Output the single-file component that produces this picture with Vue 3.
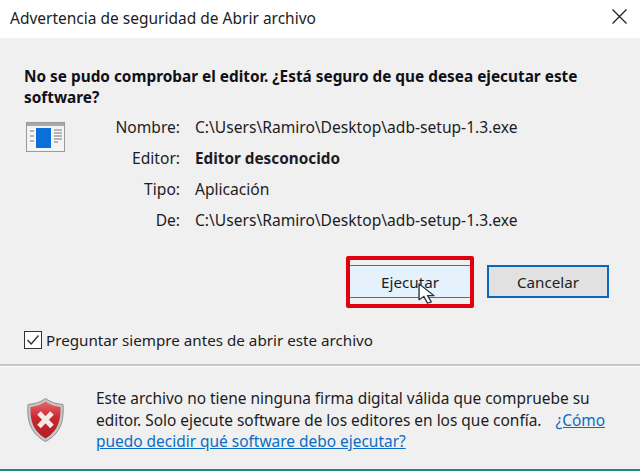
<template>
  <div class="dialog">
    <header class="titlebar">
      <span class="title">Advertencia de seguridad de Abrir archivo</span>
      <svg class="close" width="15" height="15" viewBox="0 0 15 15">
        <path d="M0.5 0.5L14.5 14.5M14.5 0.5L0.5 14.5" stroke="#222" stroke-width="1.3" fill="none" />
      </svg>
    </header>

    <main class="main">
      <h1 class="heading">No se pudo comprobar el editor. ¿Está seguro de que desea ejecutar este software?</h1>

      <div class="info">
        <svg class="file-icon" width="40" height="31" viewBox="0 0 40 31">
          <rect x="0.5" y="0.5" width="38" height="29" fill="#f4f4f4" stroke="#9a9a9a" />
          <rect x="1" y="1" width="37" height="3" fill="#a9a9a9" />
          <rect x="10" y="6" width="15" height="20" fill="#0a6fd6" />
          <path d="M4 9h4M4 14h4M4 19h4M28 8h8M28 11h8M28 14h8M28 17h8M28 20h4" stroke="#a0a0a0" stroke-width="1.4" />
        </svg>
        <dl class="fields">
          <template v-for="row in fields" :key="row.label">
            <dt>{{ row.label }}</dt>
            <dd :class="{ strong: row.strong }">{{ row.value }}</dd>
          </template>
        </dl>
      </div>

      <div class="actions">
        <button class="btn run">
          Ejecutar
          <span class="highlight"></span>
          <svg class="cursor" width="17" height="21" viewBox="0 0 16 25" preserveAspectRatio="none">
            <path d="M1 1V20L5.5 16L9 24L12.5 22.5L9 15H15Z" fill="#fff" stroke="#2a3040" stroke-width="1.3" stroke-linejoin="round" />
          </svg>
        </button>
        <button class="btn cancel">Cancelar</button>
      </div>

      <label class="ask">
        <span class="box">
          <svg width="14" height="12" viewBox="0 0 14 12">
            <path d="M1.5 6L5.2 10L12.5 1.5" stroke="#333" stroke-width="1.4" fill="none" />
          </svg>
        </span>
        Preguntar siempre antes de abrir este archivo
      </label>
    </main>

    <footer class="warning">
      <svg class="shield" width="37" height="44" viewBox="0 0 37 44">
        <defs>
          <linearGradient id="shieldFill" x1="0" y1="0" x2="0" y2="1">
            <stop offset="0" stop-color="#e4686c" />
            <stop offset="0.45" stop-color="#c9262d" />
            <stop offset="1" stop-color="#b01f25" />
          </linearGradient>
        </defs>
        <path d="M18.5 0.5C14 4 8 6 1 6.5C0 20 2 35 18.5 43.5C35 35 37 20 36 6.5C29 6 23 4 18.5 0.5Z" fill="#c6c6c6" stroke="#8f8f8f" />
        <path d="M18.5 3.5C14.5 6.5 9 8.5 3.5 9C3 21 5.5 33 18.5 40.5C31.5 33 34 21 33.5 9C28 8.5 22.5 6.5 18.5 3.5Z" fill="url(#shieldFill)" />
        <path d="M12 15L25 28.5M25 15L12 28.5" stroke="#f5e9e9" stroke-width="5" fill="none" />
      </svg>
      <div class="warning-text">
        <div>Este archivo no tiene ninguna firma digital válida que compruebe su</div>
        <div class="line">
          <span>editor. Solo ejecute software de los editores en los que confía.</span>
          <a class="link">¿Cómo</a>
        </div>
        <div><a class="link">puedo decidir qué software debo ejecutar?</a></div>
      </div>
    </footer>
  </div>
</template>

<script setup>
const path = 'C:\\Users\\Ramiro\\Desktop\\adb-setup-1.3.exe'

const fields = [
  { label: 'Nombre:', value: path },
  { label: 'Editor:', value: 'Editor desconocido', strong: true },
  { label: 'Tipo:', value: 'Aplicación' },
  { label: 'De:', value: path },
]
</script>

<style>
html,
body {
  margin: 0;
  background: #f0f0f0;
}
</style>

<style scoped>
.dialog {
  width: 640px;
  height: 471px;
  box-sizing: border-box;
  display: flex;
  flex-direction: column;
  overflow: hidden;
  background: #f0f0f0;
  border-bottom: 2px solid #178a8c;
  font-family: "Noto Sans", "Open Sans", sans-serif;
  font-size: 15.6px;
  color: #1c1c24;
}

.titlebar {
  height: 38px;
  flex: none;
  display: flex;
  align-items: center;
  justify-content: space-between;
  padding: 0 13px 2px 10px;
  box-sizing: border-box;
  background: #fff;
}

.title {
  font-size: 15.5px;
}

.close {
  margin-bottom: 3px;
}

.main {
  height: 328px;
  flex: none;
  box-sizing: border-box;
  padding: 28px 24px 0;
  border-bottom: 2px solid #c4c4c4;
  box-shadow: 0 1px 0 #fff;
}

.heading {
  margin: 0;
  width: 560px;
  font-size: 15.36px;
  line-height: 21px;
  font-weight: 700;
  color: #101018;
}

.info {
  display: flex;
  margin-top: 3px;
}

.file-icon {
  flex: none;
  margin: 11px 0 0 2px;
}

.fields {
  margin: 0 0 0 24px;
  display: grid;
  grid-template-columns: 90px auto;
  column-gap: 15px;
  grid-auto-rows: 31px;
  align-items: center;
}

.fields dt {
  text-align: right;
}

.fields dd {
  margin: 0;
}

.fields dd.strong {
  font-weight: 700;
  font-size: 15.3px;
}

.actions {
  display: flex;
  justify-content: flex-end;
  gap: 16px;
  margin: 30px 7px 0 0;
}

.btn {
  position: relative;
  height: 33px;
  box-sizing: border-box;
  padding: 0;
  font: inherit;
  font-size: 15.2px;
  color: inherit;
  border-radius: 0;
}

.run {
  width: 122px;
  background: #e5f1fb;
  border: 1px solid #2a7ca8;
}

.cancel {
  width: 122px;
  background: #e1e1e1;
  border: 2px solid #0a68bf;
}

.highlight {
  position: absolute;
  left: -4px;
  right: -4px;
  top: -10px;
  bottom: -11px;
  border: 4px solid #e00010;
  border-radius: 2px;
}

.cursor {
  position: absolute;
  left: 68px;
  top: 17px;
}

.ask {
  display: flex;
  align-items: center;
  gap: 4px;
  margin-top: 32px;
  font-size: 15.2px;
}

.box {
  width: 18px;
  height: 18px;
  box-sizing: border-box;
  display: flex;
  align-items: center;
  justify-content: center;
  background: #fff;
  border: 1px solid #333;
}

.warning {
  flex: 1;
  display: flex;
  padding: 22px 20px 0 27px;
  gap: 32px;
  font-size: 15.44px;
}

.shield {
  flex: none;
  margin-top: 10px;
}

.warning-text {
  width: 512px;
  line-height: 21.5px;
}

.line {
  display: flex;
  gap: 14px;
}

.link {
  color: #0a6cc4;
  text-decoration: underline;
}
</style>
